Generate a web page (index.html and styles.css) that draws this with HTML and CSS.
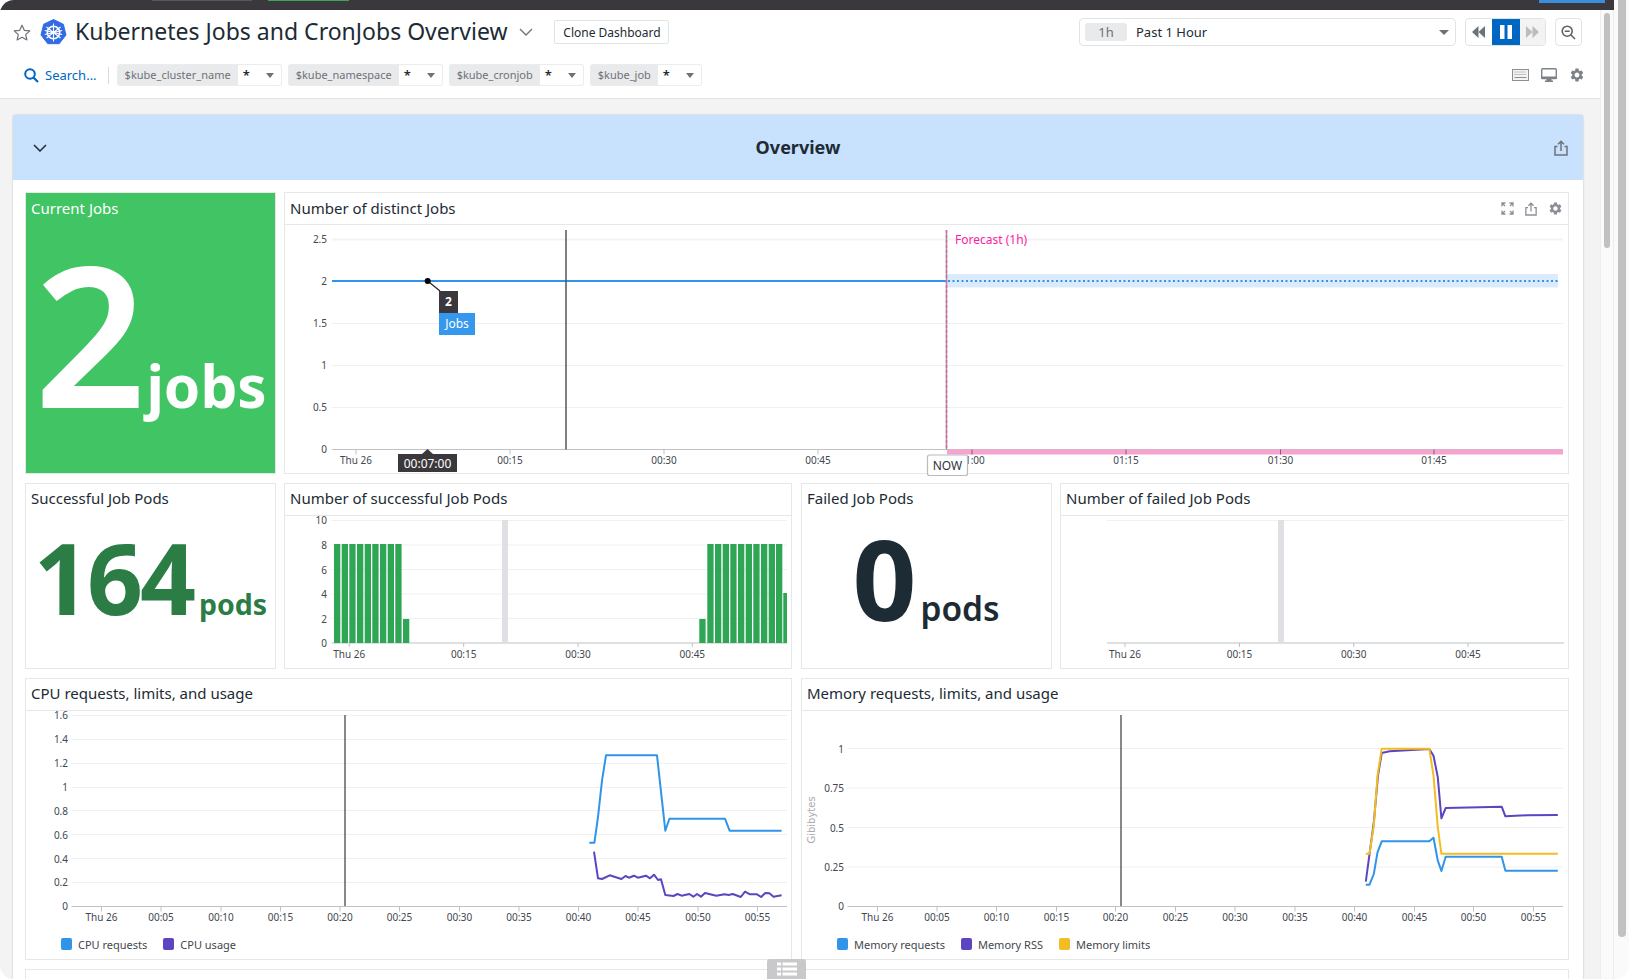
FILE: index.html
```html
<!DOCTYPE html>
<html>
<head>
	<title>Kubernetes Jobs and CronJobs Overview</title>
	<link rel="stylesheet" href="styles.css">
</head>
<body>
	<svg class="defs" width="0" height="0">
		<symbol id="gear" viewBox="0 0 24 24"><path d="M19.14 12.94c.04-.3.06-.61.06-.94 0-.32-.02-.64-.07-.94l2.03-1.58a.49.49 0 0 0 .12-.61l-1.92-3.32a.488.488 0 0 0-.59-.22l-2.39.96c-.5-.38-1.03-.7-1.62-.94l-.36-2.54a.484.484 0 0 0-.48-.41h-3.84c-.24 0-.43.17-.47.41l-.36 2.54c-.59.24-1.13.57-1.62.94l-2.39-.96c-.22-.08-.47 0-.59.22L2.74 8.87c-.12.21-.08.47.12.61l2.03 1.58c-.05.3-.09.63-.09.94s.02.64.07.94l-2.03 1.58a.49.49 0 0 0-.12.61l1.92 3.32c.12.22.37.29.59.22l2.39-.96c.5.38 1.03.7 1.62.94l.36 2.54c.05.24.24.41.48.41h3.84c.24 0 .44-.17.47-.41l.36-2.54c.59-.24 1.13-.56 1.62-.94l2.39.96c.22.08.47 0 .59-.22l1.92-3.32c.12-.22.07-.47-.12-.61l-2.01-1.58zM12 15.6c-1.98 0-3.6-1.62-3.6-3.6s1.62-3.6 3.6-3.6 3.6 1.62 3.6 3.6-1.62 3.6-3.6 3.6z"/></symbol>
		<symbol id="share" viewBox="0 0 14 16"><path d="M3.5 6.5H1v8.5h12V6.5h-2.500M7 11V1.500M4 4.200 7 1.200l3 3" fill="none" stroke="currentColor" stroke-width="1.500"/></symbol>
	</svg>

	<div class="window">
		<div class="topbar">
			<span class="tab-outline"></span>
			<span class="tab-green"></span>
			<span class="tab-blue"></span>
		</div>
		<div class="window-body">
			<div class="main">
				<div class="header">
					<div class="header-row">
						<svg class="star" viewBox="0 0 18 17"><path d="M9 1.200l2.300 5.100 5.500.6-4.100 3.700 1.200 5.400L9 13.200 4.100 16l1.200-5.400L1.200 6.900l5.500-.6z" fill="none" stroke="#6d7278" stroke-width="1.200" stroke-linejoin="round"/></svg>
						<svg class="k8s" viewBox="0 0 27 26">
							<path d="M13.500 .5l9.800 4.700 2.700 10.800-6.800 8.700H7.800L1 16 3.700 5.200z" fill="#326ce5" stroke="#326ce5" stroke-linejoin="round"/>
							<circle cx="13.500" cy="13.500" r="6.200" fill="none" stroke="#fff" stroke-width="1.600"/>
							<path d="M13.500 4.500v18M6.500 8l14 11M20.500 8l-14 11M4.800 15.500l17.400-4M22.200 15.500l-17.400-4" stroke="#fff" stroke-width="1.100"/>
							<circle cx="13.500" cy="13.500" r="1.700" fill="#fff"/>
						</svg>
						<h1 class="title">Kubernetes Jobs and CronJobs Overview</h1>
						<svg class="title-chevron" viewBox="0 0 14 8"><path d="M1 1l6 6 6-6" fill="none" stroke="#6d7278" stroke-width="1.300"/></svg>
						<button class="clone">Clone Dashboard</button>
						<div class="picker">
							<span class="picker-pill">1h</span>
							<span class="picker-label">Past 1 Hour</span>
							<span class="caret"></span>
						</div>
						<div class="media">
							<span class="media-btn">
								<svg width="13" height="12" viewBox="0 0 13 12"><path d="M6.500 0v12L0 6zM13 0v12L6.500 6z" fill="#6d7278"/></svg>
							</span>
							<span class="media-btn is-active">
								<svg width="12" height="14" viewBox="0 0 12 14"><path d="M0 0h4.500v14H0zM7.500 0H12v14H7.500z" fill="#fff"/></svg>
							</span>
							<span class="media-btn is-off">
								<svg width="13" height="12" viewBox="0 0 13 12"><path d="M0 0v12l6.500-6zM6.500 0v12L13 6z" fill="#b9bcc1"/></svg>
							</span>
						</div>
						<span class="zoom-btn">
							<svg width="15" height="15" viewBox="0 0 15 15"><circle cx="6.200" cy="6.200" r="5" fill="none" stroke="#5d6269" stroke-width="1.600"/><path d="M3.700 6.200h5M9.800 9.800l4.200 4.200" stroke="#5d6269" stroke-width="1.600"/></svg>
						</span>
					</div>
					<div class="header-row vars">
						<svg class="search-icon" viewBox="0 0 15 15"><circle cx="6" cy="6" r="4.800" fill="none" stroke="#0066c4" stroke-width="2"/><path d="M9.500 9.500l4.500 4.500" stroke="#0066c4" stroke-width="2.200"/></svg>
						<span class="search-text">Search...</span>
						<span class="vars-sep"></span>
						<div class="chip"><span class="chip-name">$kube_cluster_name</span><span class="chip-value">*<span class="caret small"></span></span></div>
						<div class="chip"><span class="chip-name">$kube_namespace</span><span class="chip-value">*<span class="caret small"></span></span></div>
						<div class="chip"><span class="chip-name">$kube_cronjob</span><span class="chip-value">*<span class="caret small"></span></span></div>
						<div class="chip"><span class="chip-name">$kube_job</span><span class="chip-value">*<span class="caret small"></span></span></div>
						<div class="header-tools">
							<svg width="17" height="12" viewBox="0 0 17 12"><rect x=".5" y=".5" width="16" height="11" fill="#f3f3f3" stroke="#8b9097"/><path d="M2.500 3h12M2.500 5.500h12" stroke="#8b9097" stroke-dasharray="1 1"/><path d="M2.500 8.500h12" stroke="#8b9097"/></svg>
							<svg width="16" height="14" viewBox="0 0 16 14"><rect x=".7" y=".7" width="14.600" height="9.800" rx="1" fill="#fff" stroke="#7d8288" stroke-width="1.400"/><path d="M0 8.500h16v2.500H0zM5.500 11h5v1.500H12V14H4v-1.500h1.500z" fill="#7d8288"/></svg>
							<svg class="tool-gear" width="16" height="16"><use href="#gear"/></svg>
						</div>
					</div>
				</div>

				<div class="content">
					<section class="group">
						<div class="group-head">
							<svg width="14" height="8" viewBox="0 0 14 8"><path d="M1 1l6 6 6-6" fill="none" stroke="#1c2b34" stroke-width="1.500"/></svg>
							<h2 class="group-title">Overview</h2>
							<svg class="group-share" width="14" height="16"><use href="#share"/></svg>
						</div>
						<div class="group-body">

							<div class="row row-jobs">
								<div class="tile tile-green">
									<div class="tile-title">Current Jobs</div>
									<div class="tile-value value-jobs"><span class="num">2</span><span class="unit">jobs</span></div>
								</div>
								<div class="panel">
									<div class="panel-head">
										Number of distinct Jobs
										<div class="panel-tools">
											<svg width="13" height="13" viewBox="0 0 13 13"><path d="M1 4.500V1h3.500M8.500 1H12v3.500M12 8.500V12H8.500M4.500 12H1V8.500M1.500 1.500l2.500 2.500M11.500 1.500 9 4M11.500 11.500 9 9M1.500 11.500 4 9" fill="none" stroke="#8b9097" stroke-width="1.300"/></svg>
											<svg width="12" height="14"><use href="#share"/></svg>
											<svg width="15" height="15"><use href="#gear"/></svg>
										</div>
									</div>
									<svg class="chart" width="1283" height="248" viewBox="285 225 1283 248">
										<path class="grid" d="M332 239.500H1563M332 323.500H1563M332 365.500H1563M332 407.500H1563"/>
										<path class="grid-top" d="M332 239.500H1563"/>
										<path class="axis" d="M332 449.500H1563M356 449.500v5M510 449.500v5M664 449.500v5M818 449.500v5M972 449.500v5M1126 449.500v5M1280.500 449.500v5M1434 449.500v5"/>
										<rect x="947" y="274" width="611" height="13.500" fill="#dcebfb"/>
										<rect x="947" y="449.500" width="616" height="5" fill="#f7a3cf"/>
										<path class="axis" d="M972 449.500v5M1126 449.500v5M1280.500 449.500v5M1434 449.500v5" style="stroke:#8a5a78"/>
										<path d="M332 281H947" stroke="#2f94ea" stroke-width="2"/>
										<path d="M948 281H1558" stroke="#2f94ea" stroke-width="2" stroke-dasharray="2 2.500"/>
										<path d="M566 230V449.500" stroke="#54565a" stroke-width="1.500"/>
										<path d="M946.500 230V449.500" stroke="#9a9a9e" stroke-width="1.500"/>
										<path d="M946.500 230V449.500" stroke="#e0609f" stroke-width="1.500" stroke-dasharray="3 2"/>
										<text class="ylabel" x="327" y="243">2.5</text>
										<text class="ylabel" x="327" y="284.500">2</text>
										<text class="ylabel" x="327" y="327">1.5</text>
										<text class="ylabel" x="327" y="369">1</text>
										<text class="ylabel" x="327" y="411">0.5</text>
										<text class="ylabel" x="327" y="453">0</text>
										<text class="xlabel" x="356" y="463.500">Thu 26</text>
										<text class="xlabel" x="510" y="463.500">00:15</text>
										<text class="xlabel" x="664" y="463.500">00:30</text>
										<text class="xlabel" x="818" y="463.500">00:45</text>
										<text class="xlabel" x="972" y="463.500">01:00</text>
										<text class="xlabel" x="1126" y="463.500">01:15</text>
										<text class="xlabel" x="1280.500" y="463.500">01:30</text>
										<text class="xlabel" x="1434" y="463.500">01:45</text>
										<text class="forecast" x="955" y="244">Forecast (1h)</text>
										<path d="M427.700 281 440 291" stroke="#222" stroke-width="1.200"/>
										<circle cx="427.700" cy="281" r="3" fill="#000"/>
										<rect x="439" y="291" width="19" height="22" fill="#3a383d"/>
										<text class="tip-value" x="448.500" y="306">2</text>
										<rect x="439" y="313" width="36" height="22" fill="#3598ec"/>
										<text class="tip-name" x="457" y="328">Jobs</text>
										<path d="M422 454l5.500-5 5.500 5z" fill="#3a383d"/>
										<rect x="398" y="454" width="59" height="18" fill="#3a383d"/>
										<text class="tip-time" x="427.500" y="467.500">00:07:00</text>
										<rect x="927.500" y="455" width="40" height="20.500" rx="2" fill="#fff" stroke="#b9bbbe" stroke-width="1.200"/>
										<text class="now" x="947.500" y="469.500">NOW</text>
									</svg>
								</div>
							</div>

							<div class="row row-pods">
								<div class="tile tile-pods">
									<div class="tile-title">Successful Job Pods</div>
									<div class="tile-value value-good"><span class="num">164</span><span class="unit">pods</span></div>
								</div>
								<div class="panel panel-good">
									<div class="panel-head">Number of successful Job Pods</div>
									<svg class="chart" width="506" height="152" viewBox="285 517 506 152">
										<path class="grid" d="M331.700 521.500H787M331.700 546H787M331.700 570.500H787M331.700 595H787M331.700 619.500H787"/>
										<path class="axis" d="M331.700 644H787M349.300 644v4M463.700 644v4M578 644v4M692.300 644v4"/>
										<rect x="502" y="521" width="6" height="123" fill="#dfdfe4"/>
										<path class="bars" d="M334 545h6.300v99H334zM341.700 545H348v99h-6.300zM349.300 545h6.300v99h-6.300zM357 545h6.300v99H357zM364.700 545H371v99h-6.300zM372.300 545h6.300v99h-6.300zM380 545h6.300v99H380zM387.700 545H394v99h-6.300zM395.300 545h6.300v99h-6.300zM403 620h6.300v24H403z"/>
										<path class="bars" d="M699.300 620h6.300v24h-6.300zM707.300 545h6.300v99h-6.300zM715 545h6.300v99H715zM722.700 545h6.300v99h-6.300zM730.300 545h6.300v99h-6.300zM738 545h6.300v99H738zM745.700 545h6.300v99h-6.300zM753.300 545h6.300v99h-6.300zM761 545h6.300v99H761zM768.700 545h6.300v99h-6.300zM776 545h6.300v99H776zM783.300 594h3.700v50h-3.700z"/>
										<text class="ylabel" x="327" y="525">10</text>
										<text class="ylabel" x="327" y="550">8</text>
										<text class="ylabel" x="327" y="574.500">6</text>
										<text class="ylabel" x="327" y="599">4</text>
										<text class="ylabel" x="327" y="623.500">2</text>
										<text class="ylabel" x="327" y="648">0</text>
										<text class="xlabel" x="349.300" y="659">Thu 26</text>
										<text class="xlabel" x="463.700" y="659">00:15</text>
										<text class="xlabel" x="578" y="659">00:30</text>
										<text class="xlabel" x="692.300" y="659">00:45</text>
									</svg>
								</div>
								<div class="tile tile-pods">
									<div class="tile-title">Failed Job Pods</div>
									<div class="tile-value value-failed"><span class="num">0</span><span class="unit">pods</span></div>
								</div>
								<div class="panel panel-failed">
									<div class="panel-head">Number of failed Job Pods</div>
									<svg class="chart" width="507" height="152" viewBox="1061 517 507 152">
										<path class="grid-faint" d="M1107 521.500H1564"/>
										<path class="axis" d="M1107 644H1564M1125 644v4M1239.500 644v4M1353.700 644v4M1468 644v4"/>
										<rect x="1278" y="521" width="6" height="123" fill="#dfdfe4"/>
										<text class="xlabel" x="1125" y="659">Thu 26</text>
										<text class="xlabel" x="1239.500" y="659">00:15</text>
										<text class="xlabel" x="1353.700" y="659">00:30</text>
										<text class="xlabel" x="1468" y="659">00:45</text>
									</svg>
								</div>
							</div>

							<div class="row row-usage">
								<div class="panel">
									<div class="panel-head">CPU requests, limits, and usage</div>
									<svg class="chart" width="765" height="222" viewBox="26 712 765 222">
										<path class="grid" d="M71.500 716.500H787M71.500 740.500H787M71.500 764.500H787M71.500 788.500H787M71.500 811.500H787M71.500 835.500H787M71.500 859.500H787M71.500 883.500H787"/>
										<path class="axis" d="M71.500 907.500H787M101.500 907.500v5M161 907.500v5M221 907.500v5M280.500 907.500v5M340 907.500v5M399.500 907.500v5M459.500 907.500v5M519 907.500v5M578.500 907.500v5M638 907.500v5M698 907.500v5M757.500 907.500v5"/>
										<path d="M345 716V907" stroke="#3a3a3e" stroke-width="1.200"/>
										<path class="line blue" d="M589.300 843.700 594.400 843.700 598 818 602 781.700 606 756.300 657 756.300 665.300 831.700 669.400 819.700 725 819.700 729.600 831.700 781.600 831.700"/>
										<path class="line purple" d="M594 852.700 598 879.300 602 880 609.700 876.300 621.400 880 625.500 877 629 878.700 634 876.700 637.800 878.700 646 876.700 650 879.300 654 875.700 658 881 661 880.300 665.300 896 673.500 897 677.500 895 681.600 896.700 689.300 895 693.400 897.700 697 895 701 897.700 705 894 716.300 896.700 724.500 895.300 728.600 896 732.700 895 740.800 898 745 892.700 750 895.300 757 895.300 761.200 898 765.300 894 769.400 894.300 773.500 897.700 781.600 896.300"/>
										<text class="ylabel" x="68" y="720">1.6</text>
										<text class="ylabel" x="68" y="744">1.4</text>
										<text class="ylabel" x="68" y="768">1.2</text>
										<text class="ylabel" x="68" y="792">1</text>
										<text class="ylabel" x="68" y="815.500">0.8</text>
										<text class="ylabel" x="68" y="839.500">0.6</text>
										<text class="ylabel" x="68" y="863.500">0.4</text>
										<text class="ylabel" x="68" y="887">0.2</text>
										<text class="ylabel" x="68" y="911">0</text>
										<text class="xlabel" x="101.500" y="922">Thu 26</text>
										<text class="xlabel" x="161" y="922">00:05</text>
										<text class="xlabel" x="221" y="922">00:10</text>
										<text class="xlabel" x="280.500" y="922">00:15</text>
										<text class="xlabel" x="340" y="922">00:20</text>
										<text class="xlabel" x="399.500" y="922">00:25</text>
										<text class="xlabel" x="459.500" y="922">00:30</text>
										<text class="xlabel" x="519" y="922">00:35</text>
										<text class="xlabel" x="578.500" y="922">00:40</text>
										<text class="xlabel" x="638" y="922">00:45</text>
										<text class="xlabel" x="698" y="922">00:50</text>
										<text class="xlabel" x="757.500" y="922">00:55</text>
									</svg>
									<div class="legend">
										<span class="legend-item"><i class="swatch sw-blue"></i>CPU requests</span>
										<span class="legend-item"><i class="swatch sw-purple"></i>CPU usage</span>
									</div>
								</div>
								<div class="panel">
									<div class="panel-head">Memory requests, limits, and usage</div>
									<svg class="chart" width="766" height="222" viewBox="802 712 766 222">
										<path class="grid" d="M847.500 749.500H1563M847.500 789H1563M847.500 828.500H1563M847.500 868H1563"/>
										<path class="axis" d="M847.500 907.500H1563M877.500 907.500v5M937 907.500v5M996.500 907.500v5M1056.500 907.500v5M1115.500 907.500v5M1175.500 907.500v5M1235 907.500v5M1295 907.500v5M1354.500 907.500v5M1414.500 907.500v5M1473.500 907.500v5M1533.500 907.500v5"/>
										<path d="M1121 716V907" stroke="#3a3a3e" stroke-width="1.200"/>
										<path class="line blue" d="M1365.800 885.700 1369.500 885.700 1373.800 875 1377.500 853.300 1381.700 842.300 1429.300 842.300 1433.500 838.700 1437.800 861.700 1441.400 872 1445.700 857.700 1501.700 857.700 1505.400 871.700 1557.800 871.700"/>
										<path class="line purple" d="M1365.800 882.700 1373.800 823.300 1378 776.700 1381.700 754 1389.600 752.300 1429.300 750 1433.500 756.700 1437.800 778.300 1441.400 819.300 1445.700 809 1501.700 807.700 1505.400 817.300 1527 816.300 1557.800 816"/>
										<path class="line yellow" d="M1365.800 854.700 1369.500 854.700 1373.800 826.700 1377.500 776.700 1381.700 749.700 1429.300 749.700 1433.500 776.700 1437.800 828.300 1441.400 854.700 1557.800 854.700"/>
										<text class="ylabel" x="844" y="753.500">1</text>
										<text class="ylabel" x="844" y="793">0.75</text>
										<text class="ylabel" x="844" y="832.500">0.5</text>
										<text class="ylabel" x="844" y="872">0.25</text>
										<text class="ylabel" x="844" y="911">0</text>
										<text class="unit-label" transform="translate(815 821) rotate(-90)">Gibibytes</text>
										<text class="xlabel" x="877.500" y="922">Thu 26</text>
										<text class="xlabel" x="937" y="922">00:05</text>
										<text class="xlabel" x="996.500" y="922">00:10</text>
										<text class="xlabel" x="1056.500" y="922">00:15</text>
										<text class="xlabel" x="1115.500" y="922">00:20</text>
										<text class="xlabel" x="1175.500" y="922">00:25</text>
										<text class="xlabel" x="1235" y="922">00:30</text>
										<text class="xlabel" x="1295" y="922">00:35</text>
										<text class="xlabel" x="1354.500" y="922">00:40</text>
										<text class="xlabel" x="1414.500" y="922">00:45</text>
										<text class="xlabel" x="1473.500" y="922">00:50</text>
										<text class="xlabel" x="1533.500" y="922">00:55</text>
									</svg>
									<div class="legend">
										<span class="legend-item"><i class="swatch sw-blue"></i>Memory requests</span>
										<span class="legend-item"><i class="swatch sw-purple"></i>Memory RSS</span>
										<span class="legend-item"><i class="swatch sw-yellow"></i>Memory limits</span>
									</div>
								</div>
							</div>

							<div class="panel panel-next"></div>
						</div>
					</section>
				</div>
				<div class="list-toggle">
					<svg width="20" height="14" viewBox="0 0 20 14"><path d="M0 .5h4v3H0zM5.500 .5H20v3H5.500zM0 5.500h4v3H0zM5.500 5.500H20v3H5.500zM0 10.500h4v3H0zM5.500 10.500H20v3H5.500z" fill="#fff"/></svg>
				</div>
			</div>
			<div class="track"><div class="track-thumb"></div></div>
		</div>
	</div>
	<div class="outer-track"><div class="outer-thumb"></div></div>
</body>
</html>
```

FILE: styles.css
```css
* {
	box-sizing: border-box;
}

body {
	margin: 0;
	height: 979px;
	overflow: hidden;
	display: flex;
	background-color: #fff;
	font-family: "Noto Sans", "Open Sans", sans-serif;
	color: #1c2b34;
}

.defs {
	position: absolute;
}

.window {
	width: 1614px;
	height: 979px;
	display: flex;
	flex-direction: column;
	border-radius: 14px 0 0 14px;
	overflow: hidden;
}

.topbar {
	height: 10px;
	flex: none;
	display: flex;
	background-color: #3a383d;
}

.tab-outline {
	width: 100px;
	height: 1px;
	margin-left: 152px;
	background-color: #5a585d;
}

.tab-green {
	width: 81px;
	height: 1px;
	margin-left: 16px;
	background-color: #3aa757;
}

.tab-blue {
	width: 66px;
	height: 3px;
	margin-left: 1190px;
	background-color: #3b8edb;
}

.window-body {
	flex: 1;
	display: flex;
	min-height: 0;
}

.main {
	width: 1600px;
	position: relative;
	display: flex;
	flex-direction: column;
}

/* header */
.header {
	height: 89px;
	flex: none;
	background-color: #fff;
	border-bottom: 1px solid #e2e3e5;
	padding-top: 8px;
}

.header-row {
	display: flex;
	align-items: center;
	height: 28px;
	padding-left: 13px;
}

.star {
	width: 18px;
	height: 17px;
	margin-right: 9px;
}

.k8s {
	width: 27px;
	height: 26px;
}

.title {
	margin: -2px 0 0 8px;
	font-size: 23px;
	font-weight: 400;
	white-space: nowrap;
}

.title-chevron {
	width: 14px;
	height: 8px;
	margin-left: 12px;
}

.clone {
	width: 115px;
	height: 24px;
	margin-left: 21px;
	padding: 0;
	font: 12px "Noto Sans", sans-serif;
	color: #1c2b34;
	background-color: #fff;
	border: 1px solid #e2e3e5;
	border-radius: 2px;
}

.picker {
	width: 377px;
	height: 28px;
	margin-left: auto;
	display: flex;
	align-items: center;
	padding: 0 6px 0 5px;
	border: 1px solid #e2e3e5;
	border-radius: 4px;
}

.picker-pill {
	width: 42px;
	height: 18px;
	line-height: 18px;
	text-align: center;
	font-size: 13px;
	color: #6d7278;
	background-color: #e9eaec;
	border-radius: 3px;
}

.picker-label {
	margin-left: 9px;
	font-size: 13px;
	flex: 1;
}

.caret {
	width: 0;
	height: 0;
	border-left: 5px solid transparent;
	border-right: 5px solid transparent;
	border-top: 5px solid #6d7278;
}

.caret.small {
	border-left-width: 4px;
	border-right-width: 4px;
	border-top-width: 5px;
	margin-left: auto;
}

.media {
	width: 81px;
	height: 28px;
	margin-left: 9px;
	display: flex;
	border: 1px solid #e2e3e5;
	border-radius: 4px;
	overflow: hidden;
}

.media-btn {
	flex: 1;
	display: flex;
	align-items: center;
	justify-content: center;
}

.media-btn.is-active {
	flex: none;
	width: 28px;
	background-color: #0066c4;
}

.media-btn.is-off {
	background-color: #f3f3f3;
}

.zoom-btn {
	width: 27px;
	height: 28px;
	margin-left: 9px;
	margin-right: 18px;
	display: flex;
	align-items: center;
	justify-content: center;
	border: 1px solid #e2e3e5;
	border-radius: 4px;
}

.vars {
	margin-top: 17px;
	height: 24px;
	padding-left: 24px;
}

.search-icon {
	width: 15px;
	height: 15px;
}

.search-text {
	margin-left: 6px;
	font-size: 13px;
	color: #0066c4;
}

.vars-sep {
	width: 1px;
	height: 17px;
	margin: 0 9px 0 11px;
	background-color: #d8d9db;
}

.chip {
	display: flex;
	height: 20px;
	margin-right: 8px;
	font-size: 11px;
	line-height: 20px;
	box-shadow: 0 0 0 1px #ebecee;
	border-radius: 2px;
}

.chip-name {
	padding: 0 7px;
	color: #6d7278;
	background-color: #e9eaec;
}

.chip-value {
	width: 43px;
	padding: 0 7px 0 5px;
	display: flex;
	align-items: center;
	font-size: 13px;
	font-weight: 600;
}

.header-tools {
	margin-left: auto;
	margin-right: 15px;
	display: flex;
	align-items: center;
	gap: 12px;
	color: #7d8288;
	fill: #7d8288;
}

/* group */
.content {
	flex: 1;
	min-height: 0;
	padding: 16px 0 0 13px;
	background-color: #f3f3f3;
}

.group {
	width: 1570px;
	background-color: #fff;
	box-shadow: 0 0 2px rgba(0, 0, 0, 0.25);
	border-radius: 3px 3px 0 0;
}

.group-head {
	height: 65px;
	display: flex;
	align-items: center;
	justify-content: space-between;
	padding: 0 15px 2px 20px;
	background-color: #c8e2fd;
}

.group-head svg {
	margin-top: 2px;
}

.group-title {
	margin: 0 5px 0 0;
	font-size: 18px;
	font-weight: 700;
}

.group-share {
	color: #6d7278;
}

.group-body {
	padding: 12px 14px 0 12px;
	display: flex;
	flex-direction: column;
	gap: 9px;
}

.row {
	display: flex;
	gap: 9px;
}

.row-jobs {
	height: 282px;
}

.row-pods {
	height: 186px;
}

.row-usage {
	height: 282px;
}

.tile,
.panel {
	border: 1px solid #e6e7e9;
	background-color: #fff;
}

.tile {
	width: 251px;
	flex: none;
	margin-right: -1px;
	display: flex;
	flex-direction: column;
}

.tile-green {
	background-color: #41c464;
	color: #fff;
}

.tile-title {
	height: 31px;
	line-height: 31px;
	padding-left: 5px;
	font-size: 15px;
}

.tile-pods .tile-title {
	line-height: 29px;
}

.tile-value {
	display: flex;
	align-items: baseline;
	justify-content: center;
	font-weight: 700;
}

.value-jobs {
	height: 249px;
	line-height: 215px;
}

.value-jobs .num {
	font-size: 196px;
	font-weight: 600;
}

.value-jobs .unit {
	font-size: 58.500px;
}

.value-good {
	color: #2b7d45;
	height: 120px;
	line-height: 125px;
}

.value-good .num {
	font-size: 98px;
	letter-spacing: -3px;
}

.value-good .unit {
	font-size: 28.500px;
	margin-left: 6px;
}

.value-failed {
	color: #1c2b34;
	height: 120px;
	line-height: 125px;
	padding-right: 1px;
}

.value-failed .num {
	font-size: 112px;
}

.value-failed .unit {
	font-size: 33.500px;
	font-weight: 600;
	margin-left: 4px;
}

.panel {
	flex: 1;
	min-width: 0;
}

.row-pods .panel-good {
	flex: none;
	width: 508px;
}

.panel-failed {
	flex: none;
	width: 509px;
}

.panel-head {
	height: 32px;
	line-height: 30px;
	padding-left: 5px;
	font-size: 15px;
	border-bottom: 1px solid #e6e7e9;
	display: flex;
	justify-content: space-between;
	padding-right: 5px;
}

.row-pods .panel-head,
.row-usage .panel-head {
	line-height: 28px;
}

.panel-tools {
	display: flex;
	align-items: center;
	gap: 11px;
	color: #8b9097;
	fill: #8b9097;
}

.row-usage .panel:first-child {
	flex: none;
	width: 767px;
}

.panel-next {
	flex: none;
	height: 40px;
}

/* charts */
.chart {
	display: block;
	overflow: visible;
}

.chart text {
	font-family: "Noto Sans", sans-serif;
}

.grid,
.grid-faint {
	fill: none;
	stroke: #eff0f1;
	stroke-width: 1;
}

.grid-top {
	fill: none;
	stroke: #f3f3f4;
	stroke-width: 2;
}

.axis {
	fill: none;
	stroke: #bfc1c4;
	stroke-width: 1;
}

.bars {
	fill: #2ea655;
}

.line {
	fill: none;
	stroke-width: 2;
	stroke-linejoin: round;
}

.blue {
	stroke: #2f94ea;
}

.purple {
	stroke: #5d44c0;
}

.yellow {
	stroke: #f2bd22;
}

.ylabel {
	font-size: 10px;
	fill: #3f474f;
	text-anchor: end;
}

.xlabel {
	font-size: 10px;
	fill: #3f474f;
	text-anchor: middle;
}

.forecast {
	font-size: 12px;
	fill: #fb1ea3;
}

.tip-value {
	font-size: 12px;
	font-weight: 700;
	fill: #fff;
	text-anchor: middle;
}

.tip-name {
	font-size: 12px;
	fill: #fff;
	text-anchor: middle;
}

.tip-time {
	font-size: 12px;
	fill: #fff;
	text-anchor: middle;
}

.now {
	font-size: 12px;
	fill: #2c3640;
	text-anchor: middle;
}

.chart .unit-label {
	font-family: "DejaVu Sans", sans-serif;
	font-size: 10px;
	fill: #a9abae;
	text-anchor: middle;
}

.legend {
	height: 22px;
	display: flex;
	align-items: center;
	padding-left: 35px;
	gap: 16px;
	font-size: 11px;
	color: #3f474f;
}

.legend-item {
	display: flex;
	align-items: center;
}

.swatch {
	width: 11px;
	height: 12px;
	margin-right: 6px;
	border-radius: 2px;
}

.sw-blue {
	background-color: #2f94ea;
}

.sw-purple {
	background-color: #5d44c0;
}

.sw-yellow {
	background-color: #f2bd22;
}

/* floats over the bottom of the page */
.list-toggle {
	position: absolute;
	left: 767px;
	bottom: 0;
	width: 39px;
	height: 20px;
	display: flex;
	align-items: center;
	justify-content: center;
	background-color: #c9c9cb;
	border-radius: 3px 3px 0 0;
}

/* scrollbars */
.track {
	width: 14px;
	flex: none;
	padding: 3px 3px 0;
	background-color: #fafafa;
	border-left: 1px solid #ededed;
	border-right: 1px solid #ededed;
}

.track-thumb {
	height: 235px;
	border-radius: 4px;
	background-color: #c1c1c1;
}

.outer-track {
	width: 15px;
	flex: none;
	padding-left: 4px;
	background-color: #fafafa;
	border-radius: 0 0 14px 0;
}

.outer-thumb {
	width: 8px;
	height: 937px;
	border-radius: 0 0 4px 4px;
	background-color: #c1c1c1;
}
```
